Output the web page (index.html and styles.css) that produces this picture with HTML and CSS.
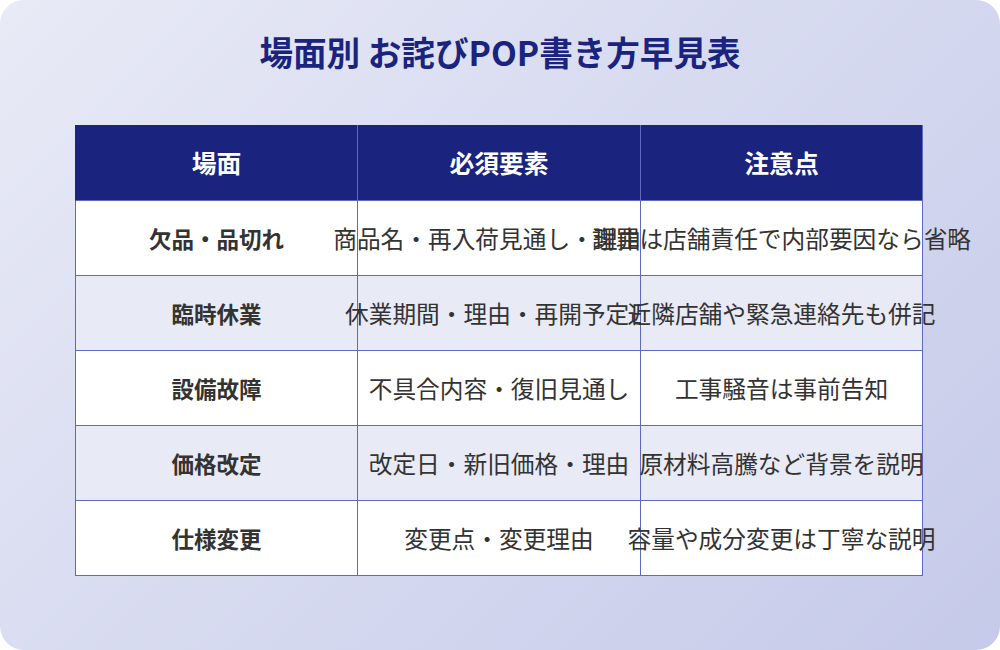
FILE: index.html
```html
<!DOCTYPE html>
<html lang="ja">
<head>
<meta charset="utf-8">
<title>場面別 お詫びPOP書き方早見表</title>
<link rel="stylesheet" href="styles.css">
</head>
<body>
<main class="card">
  <h1 class="title">場面別 お詫びPOP書き方早見表</h1>
  <div class="table">
    <div class="cell head first">場面</div>
    <div class="cell head">必須要素</div>
    <div class="cell head">注意点</div>

    <div class="cell scene first">欠品・品切れ</div>
    <div class="cell">商品名・再入荷見通し・理由等</div>
    <div class="cell">謝罪は店舗責任で内部要因なら省略</div>

    <div class="cell scene first alt">臨時休業</div>
    <div class="cell alt">休業期間・理由・再開予定日</div>
    <div class="cell alt">近隣店舗や緊急連絡先も併記</div>

    <div class="cell scene first">設備故障</div>
    <div class="cell">不具合内容・復旧見通し</div>
    <div class="cell">工事騒音は事前告知</div>

    <div class="cell scene first alt">価格改定</div>
    <div class="cell alt">改定日・新旧価格・理由</div>
    <div class="cell alt">原材料高騰など背景を説明</div>

    <div class="cell scene first">仕様変更</div>
    <div class="cell">変更点・変更理由</div>
    <div class="cell">容量や成分変更は丁寧な説明</div>
  </div>
</main>
</body>
</html>
```

FILE: styles.css
```css
html, body {
  margin: 0;
  padding: 0;
  background: #ffffff;
}

body {
  font-family: "Noto Sans CJK JP", "Noto Sans", sans-serif;
}

.card {
  box-sizing: border-box;
  width: 1000px;
  height: 650px;
  padding-top: 27px;
  border-radius: 24px;
  background: linear-gradient(135deg, #e8eaf6 0%, #c5cae9 100%);
  overflow: hidden;
}

.title {
  margin: 0 0 47.6px 0;
  font-size: 33.6px;
  line-height: 1.5;
  font-weight: 700;
  color: #1a237e;
  text-align: center;
}

.table {
  display: grid;
  grid-template-columns: 283px 283px 282px;
  width: 848px;
  margin-left: 75px;
}

.cell {
  box-sizing: border-box;
  height: 75px;
  display: flex;
  align-items: center;
  justify-content: center;
  white-space: nowrap;
  background: #ffffff;
  border-right: 1px solid #5c6bc0;
  border-bottom: 1px solid #5c6bc0;
  font-size: 23.7px;
  color: #333333;
}

.cell.first {
  border-left: 1px solid #5c6bc0;
}

.cell.alt {
  background: #e8eaf6;
}

.cell.head {
  height: 76px;
  background: #1a237e;
  color: #ffffff;
  font-weight: 700;
  font-size: 24.8px;
}

.cell.head.first {
  border-left-color: #1a237e;
}

.cell.scene {
  font-weight: 700;
  font-size: 22.5px;
}
```
